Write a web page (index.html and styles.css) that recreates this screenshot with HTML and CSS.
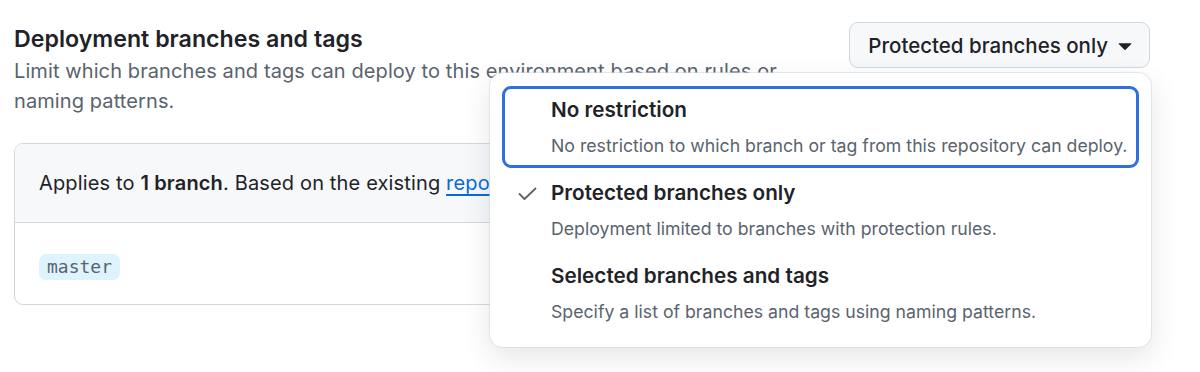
FILE: index.html
```html
<!DOCTYPE html>
<html lang="en">
<head>
<meta charset="utf-8">
<title>Deployment branches and tags</title>
<link rel="stylesheet" href="styles.css">
</head>
<body>
<div class="page">
  <div class="section-head">
    <div class="head-text">
      <h2 class="title">Deployment branches and tags</h2>
      <p class="desc">Limit which branches and tags can deploy to this environment based on rules or naming patterns.</p>
    </div>
    <button class="select-btn" type="button">
      <span>Protected branches only</span>
      <svg class="caret" viewBox="0 0 16 16"><path d="m4.427 7.427 3.396 3.396a.25.25 0 0 0 .354 0l3.396-3.396A.25.25 0 0 0 11.396 7H4.604a.25.25 0 0 0-.177.427Z" fill="#1f2328"/></svg>
    </button>
  </div>

  <div class="card">
    <div class="card-head">Applies to <strong>1 branch</strong>. Based on the existing <a href="#">repository branch protection rules</a>.</div>
    <div class="card-body"><code class="branch">master</code></div>
  </div>

  <div class="menu" role="listbox">
    <div class="item focused">
      <span class="check"></span>
      <div class="item-text">
        <div class="item-title">No restriction</div>
        <div class="item-desc">No restriction to which branch or tag from this repository can deploy.</div>
      </div>
    </div>
    <div class="item">
      <span class="check">
        <svg width="19" height="14" viewBox="0 0 19 14"><polyline points="1.5,7 6.5,12 17.5,1.5" fill="none" stroke="#59636e" stroke-width="1.8" stroke-linecap="round" stroke-linejoin="round"/></svg>
      </span>
      <div class="item-text">
        <div class="item-title">Protected branches only</div>
        <div class="item-desc">Deployment limited to branches with protection rules.</div>
      </div>
    </div>
    <div class="item">
      <span class="check"></span>
      <div class="item-text">
        <div class="item-title">Selected branches and tags</div>
        <div class="item-desc">Specify a list of branches and tags using naming patterns.</div>
      </div>
    </div>
  </div>
</div>
</body>
</html>
```

FILE: styles.css
```css
* { box-sizing: border-box; }
html, body { margin: 0; padding: 0; background: #ffffff; }
body {
  font-family: Inter, "Noto Sans", "Liberation Sans", sans-serif;
  color: #1f2328;
}
.page {
  position: relative;
  width: 1200px;
  height: 372px;
  padding: 22px 50px 0 14px;
  overflow: hidden;
}
.section-head {
  display: flex;
  justify-content: space-between;
  align-items: flex-start;
}
.title {
  margin: 0;
  font-size: 23.2px;
  font-weight: 600;
  line-height: 34px;
  letter-spacing: 0;
}
.desc {
  margin: 0;
  max-width: 800px;
  font-size: 20px;
  line-height: 30px;
  color: #59636e;
  letter-spacing: 0.1px;
}
.select-btn {
  display: flex;
  align-items: center;
  gap: 3px;
  height: 46px;
  padding: 0 10px 0 18px;
  background: #f6f8fa;
  border: 1px solid #d1d9e0;
  border-radius: 9px;
  font-family: inherit;
  font-size: 20.5px;
  font-weight: 500;
  color: #1f2328;
  letter-spacing: 0;
}
.caret { width: 28px; height: 28px; }
.card {
  margin-top: 27px;
  border: 1px solid #d1d9e0;
  border-radius: 9px;
  overflow: hidden;
}
.card-head {
  height: 79px;
  display: flex;
  align-items: center;
  padding-left: 24px;
  background: #f6f8fa;
  border-bottom: 1px solid #d1d9e0;
  font-size: 20px;
  letter-spacing: 0.15px;
  white-space: pre;
}
.card-head strong { font-weight: 600; }
.card-head a { color: #0969da; text-decoration: underline; text-underline-offset: 4px; }
.card-body {
  height: 81px;
  display: flex;
  align-items: center;
  padding: 6px 0 0 24px;
}
.branch {
  font-family: "DejaVu Sans Mono", "Liberation Mono", monospace;
  font-size: 18px;
  color: #59636e;
  background: #ddf4ff;
  border-radius: 7px;
  padding: 3px 8px;
  line-height: 20px;
}
.menu {
  position: absolute;
  left: 490px;
  top: 73px;
  width: 661px;
  height: 274px;
  padding: 13px 12px 12px;
  background: #ffffff;
  border-radius: 13px;
  box-shadow: 0 0 0 1px rgba(209, 217, 224, 0.55), 0 10px 28px rgba(66, 74, 83, 0.14);
  display: flex;
  flex-direction: column;
  gap: 1px;
}
.item {
  display: flex;
  height: 82px;
  border: 3px solid transparent;
  border-radius: 9px;
}
.item.focused { border-color: #2f6fde; }
.check {
  width: 46px;
  display: flex;
  justify-content: flex-start;
  padding-top: 15px;
  padding-left: 13px;
}
.item-text {
  display: flex;
  flex-direction: column;
  padding-top: 7px;
  gap: 10px;
}
.item-title {
  font-size: 20.7px;
  font-weight: 600;
  line-height: 28px;
  letter-spacing: 0;
}
.item-desc {
  font-size: 17.7px;
  line-height: 24px;
  color: #59636e;
  letter-spacing: 0;
}
```
